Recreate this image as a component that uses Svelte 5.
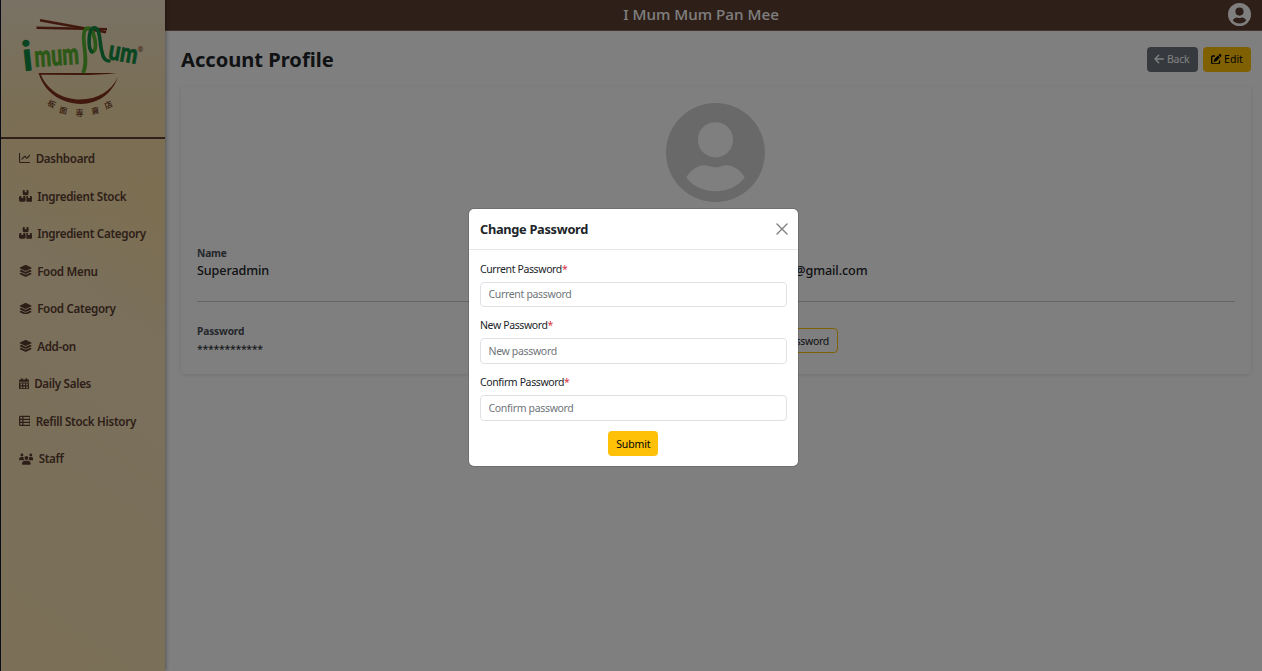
<script>
  const menu = [
    { icon: 'chart', w: 512, label: 'Dashboard' },
    { icon: 'boxes', w: 576, label: 'Ingredient Stock' },
    { icon: 'boxes', w: 576, label: 'Ingredient Category' },
    { icon: 'layers', w: 576, label: 'Food Menu' },
    { icon: 'layers', w: 576, label: 'Food Category' },
    { icon: 'layers', w: 576, label: 'Add-on' },
    { icon: 'calendar', w: 448, label: 'Daily Sales' },
    { icon: 'table', w: 512, label: 'Refill Stock History' },
    { icon: 'people', w: 640, label: 'Staff' }
  ];
  const paths = {
    chart: 'M48 52c0-13-11-24-24-24S0 39 0 52V412c0 38 30 68 68 68H488c13 0 24-11 24-24s-11-24-24-24H68c-11 0-20-9-20-20V52zM494 152c10-10 10-26 0-36s-26-10-36 0L340 234l-68-68c-10-10-26-10-36 0L108 294c-10 10-10 26 0 36s26 10 36 0L254 220l68 68c10 10 26 10 36 0z',
    boxes: 'M248 0H208c-26.500 0-48 21.500-48 48V160c0 35.300 28.700 64 64 64H352c35.300 0 64-28.700 64-64V48c0-26.500-21.500-48-48-48H328V80c0 8.800-7.200 16-16 16H264c-8.800 0-16-7.200-16-16V0zM64 256c-35.300 0-64 28.700-64 64V448c0 35.300 28.700 64 64 64H224c35.300 0 64-28.700 64-64V320c0-35.300-28.700-64-64-64H184v80c0 8.800-7.200 16-16 16H120c-8.800 0-16-7.200-16-16V256H64zM352 512H512c35.300 0 64-28.700 64-64V320c0-35.300-28.700-64-64-64H472v80c0 8.800-7.200 16-16 16H408c-8.800 0-16-7.200-16-16V256H352c-15 0-28.800 5.100-39.700 13.800c4.900 10.400 7.700 22 7.700 34.200V464c0 12.200-2.800 23.800-7.700 34.200C323.200 506.900 337 512 352 512z',
    layers: 'M264.500 5.200c14.900-6.900 32.100-6.900 47 0l218.600 101c8.500 3.900 13.900 12.400 13.900 21.800s-5.400 17.900-13.900 21.800l-218.600 101c-14.900 6.900-32.100 6.900-47 0L45.900 149.800C37.400 145.800 32 137.300 32 128s5.400-17.900 13.900-21.800L264.500 5.200zM476.900 209.600l53.200 24.600c8.500 3.900 13.900 12.400 13.900 21.800s-5.400 17.900-13.900 21.800l-218.600 101c-14.900 6.900-32.100 6.900-47 0L45.900 277.800C37.400 273.800 32 265.300 32 256s5.400-17.900 13.900-21.800l53.200-24.600 152 70.200c23.400 10.800 50.400 10.800 73.800 0l152-70.200zm-152 198.200l152-70.200 53.200 24.600c8.500 3.900 13.900 12.400 13.900 21.800s-5.400 17.900-13.900 21.800l-218.600 101c-14.900 6.900-32.100 6.900-47 0L45.900 405.800C37.400 401.800 32 393.300 32 384s5.400-17.900 13.900-21.800l53.200-24.600 152 70.200c23.400 10.800 50.400 10.800 73.800 0z',
    calendar: 'M96 32V64H48C21 64 0 85 0 112v48h448v-48c0-27-21-48-48-48h-48V32c0-18-14-32-32-32s-32 14-32 32v32H160V32c0-18-14-32-32-32S96 14 96 32zM448 192H0v272c0 27 21 48 48 48h352c27 0 48-21 48-48zM64 240h70v70H64zm125 0h70v70h-70zm125 0h70v70h-70zM64 370h70v70H64zm125 0h70v70h-70zm125 0h70v70h-70z',
    table: 'M64 32C29 32 0 61 0 96v320c0 35 29 64 64 64h384c35 0 64-29 64-64V96c0-35-29-64-64-64zM56 90h84v76H56zm140 0h260v76H196zM56 218h84v76H56zm140 0h260v76H196zM56 346h84v76H56zm140 0h260v76H196z',
    people: 'M64 88a64 64 0 1 1 128 0a64 64 0 1 1-128 0zM448 88a64 64 0 1 1 128 0a64 64 0 1 1-128 0zM236 216a84 84 0 1 1 168 0a84 84 0 1 1-168 0zM0 276c0-54 44-98 98-98h58c18 0 36 5 51 13c-14 42-3 90 28 125H38c-21 0-38-17-38-40zM640 276c0-54-44-98-98-98h-58c-18 0-36 5-51 13c14 42 3 90-28 125h197c21 0 38-17 38-40zM128 474c0-68 55-134 122-134h140c67 0 122 66 122 134c0 21-17 38-38 38H166c-21 0-38-17-38-38z'
  };
  const fields = ['Current', 'New', 'Confirm'];
</script>

{#snippet avatar()}
  <svg class="avatar" viewBox="-49.500 -49.500 99 99" aria-hidden="true">
    <path fill="currentColor" fill-rule="evenodd" d="M0-49.500A49.500 49.500 0 1 1 0 49.500A49.500 49.500 0 1 1 0-49.500ZM0-30.300A17.600 17.600 0 1 0 0 4.900A17.600 17.600 0 1 0 0-30.300ZM-29.200 25C-25 17.500-17.500 12.700-11 12.700C-7.500 12.700-5 14.700 0 14.700S7.500 12.700 11 12.700C17.500 12.700 25 17.500 29.200 25C22 34.500 11 38.700 0 38.700S-22 34.500-29.200 25Z" />
  </svg>
{/snippet}

<div class="page">
  <aside>
    <div class="brand">
      <svg class="logo" width="164" height="137" viewBox="1 0 164 137">
        <g stroke="#82301a" fill="none">
          <path d="M40 20.300L106 32.200" stroke-width="2.500" />
          <path d="M36.500 27.700L107 29.300" stroke-width="2.500" />
        </g>
        <path d="M38.500 73H117Q100 75 80 75L41 74.700C47 90 63 99.500 80 99.500C98 99.500 111 91 118 77C112 94 98 103.900 81 103.900C60 103.900 44 91 38.500 73Z" fill="#82301a" />
        <g class="letters">
          <text x="23" y="71" font-size="42" fill="#108a40" transform="rotate(-6 28 70)" textLength="11" lengthAdjust="spacingAndGlyphs">i</text>
          <text x="35" y="65.500" font-size="30" fill="#56b02c" stroke="#56b02c" stroke-width=".7" transform="rotate(-4 57 65)" textLength="44.500" lengthAdjust="spacingAndGlyphs">mum</text>
          <text x="107.500" y="59" font-size="27" fill="#128a43" stroke="#128a43" stroke-width=".7" transform="rotate(10 108 59)" textLength="29" lengthAdjust="spacingAndGlyphs">um</text>
        </g>
        <path d="M83 73C89 61 82 43 84 33C85 27 91 26 93 33C96 41 97 51 92 52" fill="none" stroke="#56b02c" stroke-width="3.700" />
        <path d="M92 52C88 49 88 31 93 28C101 26 99 42 102 52C103 58 106 61 109 61" fill="none" stroke="#128a43" stroke-width="3.600" stroke-linecap="round" />
        <text class="reg" x="137.500" y="51.500">®</text>
        <g class="cjk">
          <text x="47.500" y="107" transform="rotate(27 52 104)">板</text>
          <text x="59.500" y="113.500" transform="rotate(12 64 110)">面</text>
          <text x="75.500" y="115.500">専</text>
          <text x="91" y="114" transform="rotate(-9 95 110)">賣</text>
          <text x="104" y="108" transform="rotate(-25 108 104)">店</text>
        </g>
      </svg>
    </div>
    <nav>
      {#each menu as item}
        <a href="#top">
          <svg viewBox="0 0 {item.w} 512" style="width:{(item.w / 512) * 11.8}px" aria-hidden="true"><path fill-rule="evenodd" d={paths[item.icon]} /></svg>
          <span>{item.label}</span>
        </a>
      {/each}
    </nav>
  </aside>
  <div class="content">
    <header>
      <i></i>
      <b>I Mum Mum Pan Mee</b>
      {@render avatar()}
    </header>
    <main>
      <div class="heading">
        <h1>Account Profile</h1>
        <button class="back">
          <svg viewBox="0 0 10 10" width="10" height="10"><path d="M9.300 5H1M4.700 1.300L1 5L4.700 8.700" fill="none" stroke="currentColor" stroke-width="1.400" stroke-linecap="round" stroke-linejoin="round" /></svg>
          Back
        </button>
        <button class="edit">
          <svg viewBox="0 0 512 512" width="10.500" height="10.500"><path d="M472 22c-22-22-57-22-79 0l-31 30 98 98 30-30c22-22 22-58 0-80zM172 242c-6 6-11 13-14 22l-30 89c-3 8-1 18 6 24s15 9 24 6l89-29c8-3 16-8 22-14l168-167-98-98zM96 64C43 64 0 107 0 160v256c0 53 43 96 96 96h256c53 0 96-43 96-96v-96h-64v96c0 18-14 32-32 32H96c-18 0-32-14-32-32V160c0-18 14-32 32-32h96V64z" /></svg>
          Edit
        </button>
      </div>
      <section class="card">
        <div class="photo">{@render avatar()}</div>
        <div class="row first">
          <div><small>Name</small><strong>Superadmin</strong></div>
          <div><small>Email</small><strong class="mail">superadmin@gmail.com</strong></div>
        </div>
        <div class="row second">
          <div><small>Password</small><span class="stars">************</span></div>
          <div><button class="change">Change Password</button></div>
        </div>
      </section>
    </main>
  </div>
</div>

<div class="backdrop">
  <div class="modal">
    <div class="modal-head">
      <h2>Change Password</h2>
      <svg width="12" height="12" viewBox="0 0 12 12"><path d="M1 1L11 11M11 1L1 11" stroke="#7f7f7f" stroke-width="1.400" stroke-linecap="round" /></svg>
    </div>
    <form>
      {#each fields as f}
        <label>
          <span>{f} Password<em>*</em></span>
          <input type="password" placeholder="{f} password" />
        </label>
      {/each}
      <button class="submit" type="button">Submit</button>
    </form>
  </div>
</div>

<style>
  :global(body) { background: #fff; overflow: hidden; }
  * { box-sizing: border-box; }
  .page, .backdrop { font-family: 'Noto Sans', 'Open Sans', sans-serif; color: #212529; }
  button, input { font: inherit; }
  .page { display: grid; grid-template-columns: 165px 1fr; height: 671px; isolation: isolate; }
  aside {
    border-left: 1px solid #141a2e;
    background: linear-gradient(180deg, #f2e3c9 0, #f5dda9 110px, rgba(246, 220, 160, 0) 240px), linear-gradient(35deg, #f6dfae 0%, #f4e0b8 55%, #fadd9f 76%, #f9dca0 100%);
    box-shadow: 1px 0 4px rgba(0, 0, 0, .35);
    z-index: 1;
  }
  .brand { height: 139px; border-bottom: 2px solid #5e3e32; }
  .logo { display: block; }
  .letters { font-family: 'Lato', sans-serif; font-weight: 900; }
  .reg { font-size: 7px; fill: #82301a; }
  .cjk { font: 500 8px 'Noto Sans CJK TC', 'Noto Sans CJK JP', sans-serif; fill: #6b3524; }
  nav { padding-top: .5px; }
  nav a { display: flex; align-items: center; height: 37.560px; padding-left: 17.700px; gap: 5.200px; color: #5c3d31; text-decoration: none; font-size: 11.600px; font-weight: 600; letter-spacing: -.3px; }
  nav svg { height: 11.800px; fill: currentColor; flex: none; }
  nav span { white-space: nowrap; position: relative; top: .3px; }
  header { height: 31px; background: #5e3e32; border-bottom: 1px solid #86685c; display: grid; grid-template-columns: 1fr auto 1fr; align-items: center; padding: 0 11px 2px 0; }
  header b { color: #fff; font-size: 15.200px; font-weight: 500; transform: translateX(-7px); }
  header .avatar { width: 23px; height: 23px; color: #fff; justify-self: end; }
  main { padding: 15px 11px 0 16px; }
  .heading { display: flex; gap: 5.500px; align-items: center; height: 27px; }
  h1 { margin: 0 auto 0 0; font-size: 20.100px; line-height: 27px; font-weight: 700; }
  button { border: 0; border-radius: 4px; font-size: 10.500px; padding: 0; display: flex; align-items: center; justify-content: center; white-space: nowrap; }
  .heading button { height: 25px; gap: 2.500px; margin-top: -1px; }
  .back { background: #6c757d; color: #fff; width: 51px; letter-spacing: -.2px; }
  .edit { background: #ffc107; color: #000; width: 48px; }
  .card { margin-top: 13px; height: 288px; border-radius: 5px; box-shadow: 0 1px 4px rgba(0, 0, 0, .12); padding: 17px 16px; }
  .photo { height: 99px; display: flex; justify-content: center; color: #d3d3d3; }
  .photo .avatar { width: 99px; height: 99px; margin-right: 1px; }
  .row { display: grid; grid-template-columns: 1fr 1fr; }
  .row small, .row strong, .stars { display: block; }
  .row small { font-size: 10.200px; line-height: 16px; font-weight: 700; color: #495057; letter-spacing: -.15px; }
  .row strong { font-size: 12.600px; line-height: 20px; font-weight: 500; letter-spacing: -.1px; }
  .first { padding-top: 42.500px; height: 100px; border-bottom: 1px solid #c8c8c8; }
  .second { padding-top: 21px; }
  .stars { font-size: 10.500px; line-height: 20px; letter-spacing: -.3px; }
  .mail { width: 151.500px; display: flex !important; justify-content: flex-end; white-space: nowrap; }
  .change { width: 122px; height: 25px; border: 1px solid #ffc107; background: none; color: #212529; margin-top: 5px; justify-content: flex-end; padding-right: 8px; letter-spacing: -.3px; }
  .backdrop { position: absolute; inset: 0; background: rgba(0, 0, 0, .5); padding: 208.700px 0 0 469px; }
  .modal { width: 328.700px; height: 257.500px; background: #fff; border-radius: 5px; box-shadow: 0 0 0 1px rgba(0, 0, 0, .12); }
  .modal-head { height: 41px; display: flex; align-items: center; justify-content: space-between; padding: 0 10px 0 11px; border-bottom: 1px solid #e4e7ea; }
  h2 { font-size: 12.800px; font-weight: 700; margin: 0; letter-spacing: -.3px; }
  form { padding: 11px; font-size: 10.500px; }
  label { display: block; height: 56.700px; }
  label span { display: block; line-height: 16px; height: 21px; letter-spacing: -.38px; }
  em { font-style: normal; color: #dc3545; }
  input { display: block; width: 307px; height: 25.500px; border: 1px solid #dee2e6; border-radius: 4px; padding: 0 7.500px; outline: none; letter-spacing: -.33px; }
  input::placeholder { color: #6f757a; opacity: 1; }
  .submit { background: #ffc107; color: #000; width: 50px; height: 25px; margin: .3px auto 0; letter-spacing: -.1px; }
</style>
